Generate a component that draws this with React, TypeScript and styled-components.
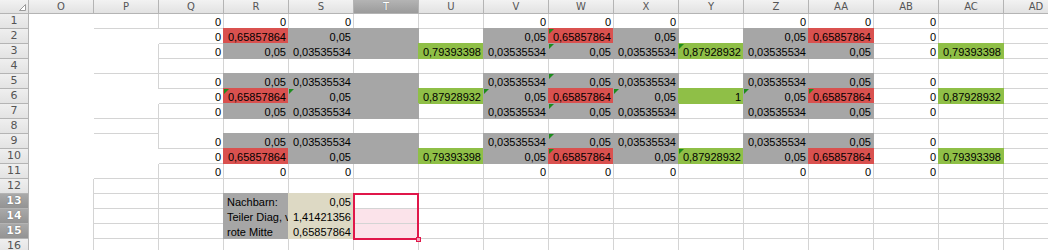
import React from "react";
import styled, { createGlobalStyle } from "styled-components";

const GlobalStyle = createGlobalStyle`
  *, *::before, *::after { box-sizing: border-box; }
  html, body { margin: 0; padding: 0; background: #fff; }
  body { overflow: hidden; }
`;

const COLS = ["O", "P", "Q", "R", "S", "T", "U", "V", "W", "X", "Y", "Z", "AA", "AB", "AC", "AD"];
const SELECTED_COL = "T";
const SELECTED_ROWS = [13, 14, 15];
const GRID = "#d4d4d4";
const HEADER_LINE = "#b4b4b4";

// prefix: r red, g gray, n green, t tan, k gray text (left), p pink; ^ = green error marker
const FILLS: Record<string, string> = {
  r: "#d9514f",
  g: "#a6a6a6",
  n: "#8fbf47",
  t: "#ddd9c4",
  k: "#a6a6a6",
};

const DIAG = "0,03535534";
const RED = "0,65857864";

const sheet: string[][] = [
  ["", "", "0", "0", "0", "", "", "0", "0", "0", "", "0", "0", "0"],
  ["", "", "0", `r|${RED}`, "g|0,05", "g|", "", "g|0,05", `r^|${RED}`, "g|0,05", "", "g|0,05", `r|${RED}`, "0"],
  ["", "", "0", "g|0,05", `g|${DIAG}`, "g|", "n|0,79393398", `g|${DIAG}`, "g^|0,05", `g|${DIAG}`, "n^|0,87928932", `g|${DIAG}`, "g|0,05", "0", "n|0,79393398"],
  [],
  ["", "", "0", "g|0,05", `g|${DIAG}`, "g|", "", `g|${DIAG}`, "g^|0,05", `g|${DIAG}`, "", `g|${DIAG}`, "g|0,05", "0"],
  ["", "", "0", `r^|${RED}`, "g^|0,05", "g|", "n|0,87928932", "g^|0,05", `r|${RED}`, "g^|0,05", "n|1", "g^|0,05", `r^|${RED}`, "0", "n|0,87928932"],
  ["", "", "0", "g|0,05", `g|${DIAG}`, "g|", "", `g|${DIAG}`, "g^|0,05", `g|${DIAG}`, "", `g|${DIAG}`, "g|0,05", "0"],
  [],
  ["", "", "0", "g|0,05", `g|${DIAG}`, "g|", "", `g|${DIAG}`, "g^|0,05", `g|${DIAG}`, "", `g|${DIAG}`, "g|0,05", "0"],
  ["", "", "0", `r|${RED}`, "g|0,05", "g|", "n|0,79393398", "g|0,05", `r^|${RED}`, "g|0,05", "n^|0,87928932", "g|0,05", `r|${RED}`, "0", "n|0,79393398"],
  ["", "", "0", "0", "0", "", "", "0", "0", "0", "", "0", "0", "0"],
  [],
  ["", "", "", "k|Nachbarn:", "t|0,05", "a|"],
  ["", "", "", "k|Teiler Diag, v", "t|1,41421356", "p|"],
  ["", "", "", "k|rote Mitte", `t|${RED}`, "p|"],
  [],
];

// white-filled cells that hide the gridlines on their right / bottom edge
const masks: Record<string, string> = {
  "2:P": "rb", "3:P": "b", "5:P": "b", "6:P": "rb", "9:P": "b", "10:P": "rb",
  "8:Q": "b",
};
for (let r = 1; r <= 16; r++) masks[`${r}:O`] = r <= 11 ? "rb" : "b";

const maskShadow = (m?: string) => {
  if (!m) return "none";
  const parts: string[] = [];
  if (m.includes("r")) parts.push("1px 0 0 #fff");
  if (m.includes("b")) parts.push("0 1px 0 #fff");
  if (m.includes("r") && m.includes("b")) parts.push("1px 1px 0 #fff");
  return parts.join(", ");
};

const Viewport = styled.div`
  width: 1048px;
  height: 250px;
  overflow: hidden;
`;

const Grid = styled.div`
  display: grid;
  grid-template-columns: 28px repeat(16, 64px);
  grid-template-rows: 13px repeat(16, 14px);
  gap: 1px;
  width: max-content;
  background: ${GRID};
`;

const Corner = styled.div`
  display: flex;
  align-items: flex-end;
  justify-content: flex-end;
  padding: 0 2px 2px 0;
  background: linear-gradient(#f2f2f2, #e2e2e2);
  box-shadow: 1px 0 0 ${HEADER_LINE}, 0 1px 0 ${HEADER_LINE}, 1px 1px 0 ${HEADER_LINE};
`;

const ColHeader = styled.div<{ $selected?: boolean }>`
  background: ${(p) =>
    p.$selected ? "linear-gradient(#b4b4b4, #9b9b9b)" : "linear-gradient(#f2f2f2, #e2e2e2)"};
  box-shadow: 1px 0 0 ${HEADER_LINE}, 0 1px 0 ${HEADER_LINE}, 1px 1px 0 ${HEADER_LINE};
  color: ${(p) => (p.$selected ? "#fff" : "#555")};
  text-shadow: ${(p) => (p.$selected ? "0 0 1px #666" : "none")};
  font: 10px/13px "DejaVu Sans", "Liberation Sans", sans-serif;
  text-align: center;
`;

const RowHeader = styled.div<{ $selected?: boolean }>`
  background: ${(p) =>
    p.$selected ? "linear-gradient(#a9a9a9, #939393)" : "linear-gradient(#efefef, #e3e3e3)"};
  box-shadow: 1px 0 0 ${HEADER_LINE}, 0 1px 0 ${HEADER_LINE}, 1px 1px 0 ${HEADER_LINE};
  color: ${(p) => (p.$selected ? "#fff" : "#555")};
  text-shadow: ${(p) => (p.$selected ? "0 0 1px #444" : "none")};
  font: ${(p) => (p.$selected ? "bold " : "")}11px/14px "DejaVu Sans", "Liberation Sans", sans-serif;
  text-align: center;
`;

const Cell = styled.div<{ $fill?: string; $pink?: boolean; $mask?: string; $left?: boolean; $active?: boolean }>`
  position: relative;
  height: 14px;
  padding: ${(p) => (p.$left ? "0 1px 0 3px" : "0 2px 0 1px")};
  background: ${(p) => p.$fill ?? (p.$pink ? "#fbe3ea" : "#fff")};
  box-shadow: ${(p) => (p.$fill ? `0 0 0 1px ${p.$fill}` : maskShadow(p.$mask))};
  color: #000;
  font: 11px/16px "Liberation Sans", Arial, sans-serif;
  text-align: ${(p) => (p.$left ? "left" : "right")};
  white-space: nowrap;
  overflow: ${(p) => (p.$active ? "visible" : "hidden")};
`;

const Marker = styled.span`
  position: absolute;
  top: 0;
  left: 0;
  border-style: solid;
  border-width: 5px 5px 0 0;
  border-color: #1d8c1d transparent transparent transparent;
`;

const Selection = styled.div`
  position: absolute;
  left: -1px;
  top: -1px;
  width: 66px;
  height: 47px;
  border: 2px solid #e0174a;
  z-index: 2;
`;

const Handle = styled.span`
  position: absolute;
  right: -4px;
  bottom: -4px;
  width: 5px;
  height: 5px;
  background: #f7a3ba;
  border: 1px solid #e0174a;
`;

const SheetCell = ({ spec, row, col }: { spec: string; row: number; col: string }) => {
  const [head, value = ""] = spec.includes("|") ? spec.split("|") : ["", spec];
  const kind = head.replace("^", "");
  const active = kind === "a";
  return (
    <Cell
      $fill={FILLS[kind]}
      $pink={kind === "p"}
      $left={kind === "k"}
      $active={active}
      $mask={masks[`${row}:${col}`]}
    >
      {head.includes("^") && <Marker />}
      {value}
      {active && (
        <Selection>
          <Handle />
        </Selection>
      )}
    </Cell>
  );
};

export default function App() {
  return (
    <>
      <GlobalStyle />
      <Viewport>
        <Grid>
          <Corner>
            <svg width="7" height="7" viewBox="0 0 7 7">
              <polygon points="6.5,0.5 6.5,6.5 0.5,6.5" fill="#fff" stroke="#9a9a9a" strokeWidth="1" />
            </svg>
          </Corner>
          {COLS.map((c) => (
            <ColHeader key={c} $selected={c === SELECTED_COL}>
              {c}
            </ColHeader>
          ))}
          {sheet.map((cells, i) => {
            const row = i + 1;
            return (
              <React.Fragment key={row}>
                <RowHeader $selected={SELECTED_ROWS.includes(row)}>{row}</RowHeader>
                {COLS.map((c, j) => (
                  <SheetCell key={c} spec={cells[j] ?? ""} row={row} col={c} />
                ))}
              </React.Fragment>
            );
          })}
        </Grid>
      </Viewport>
    </>
  );
}
